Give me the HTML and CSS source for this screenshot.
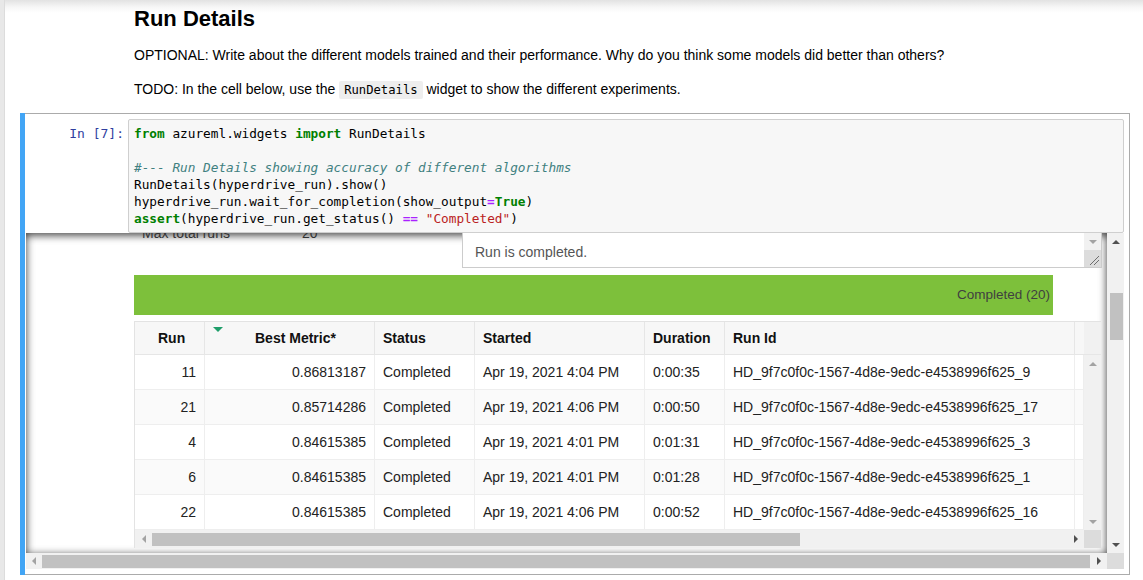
FILE: index.html
```html
<!DOCTYPE html>
<html>
<head>
<meta charset="utf-8">
<title>Run Details</title>
<link rel="stylesheet" href="styles.css">
</head>
<body>
<div class="page">
  <div class="gutter"></div>
  <main class="nb">
    <div class="md">
      <h2>Run Details</h2>
      <p>OPTIONAL: Write about the different models trained and their performance. Why do you think some models did better than others?</p>
      <p>TODO: In the cell below, use the <code class="inl">RunDetails</code> widget to show the different experiments.</p>
    </div>

    <div class="cell">
      <div class="input">
        <div class="prompt">In&nbsp;[7]:</div>
<pre class="code"><span class="k">from</span> azureml.widgets <span class="k">import</span> RunDetails

<span class="c">#--- Run Details showing accuracy of different algorithms</span>
RunDetails(hyperdrive_run).show()
hyperdrive_run.wait_for_completion(show_output<span class="o">=</span><span class="k">True</span>)
<span class="k">assert</span>(hyperdrive_run.get_status() <span class="o">==</span> <span class="s">"Completed"</span>)</pre>
      </div>

      <div class="output">
        <div class="viewport">
          <div class="widget">
            <div class="top">
              <div class="props"><span class="pk">Max total runs</span><span class="pv">20</span></div>
              <div class="log">
                <div class="log-text">Run is completed.</div>
                <div class="log-sb">
                  <div class="log-track"><div class="btn"><i class="tri-down light"></i></div></div>
                  <div class="log-grip">
                    <svg width="17" height="17" viewBox="0 0 17 17"><line x1="6" y1="15" x2="15" y2="6" stroke="#6e6e6e" stroke-width="1"/><line x1="10" y1="15" x2="15" y2="10" stroke="#6e6e6e" stroke-width="1"/></svg>
                  </div>
                </div>
              </div>
            </div>

            <div class="bar"><span>Completed (20)</span></div>

            <div class="table">
              <div class="thead">
                <div class="th th-run">Run</div>
                <div class="th th-metric"><i class="sort"></i>Best Metric*</div>
                <div class="th">Status</div>
                <div class="th">Started</div>
                <div class="th">Duration</div>
                <div class="th">Run Id</div>
                <div class="th th-fill"></div>
                <div class="th th-sb"></div>
              </div>
              <div class="tbody-wrap">
                <div class="rows">
                  <div class="row">
                    <div class="td num">11</div><div class="td num">0.86813187</div><div class="td">Completed</div><div class="td">Apr 19, 2021 4:04 PM</div><div class="td">0:00:35</div><div class="td">HD_9f7c0f0c-1567-4d8e-9edc-e4538996f625_9</div><div class="td"></div>
                  </div>
                  <div class="row">
                    <div class="td num">21</div><div class="td num">0.85714286</div><div class="td">Completed</div><div class="td">Apr 19, 2021 4:06 PM</div><div class="td">0:00:50</div><div class="td">HD_9f7c0f0c-1567-4d8e-9edc-e4538996f625_17</div><div class="td"></div>
                  </div>
                  <div class="row">
                    <div class="td num">4</div><div class="td num">0.84615385</div><div class="td">Completed</div><div class="td">Apr 19, 2021 4:01 PM</div><div class="td">0:01:31</div><div class="td">HD_9f7c0f0c-1567-4d8e-9edc-e4538996f625_3</div><div class="td"></div>
                  </div>
                  <div class="row">
                    <div class="td num">6</div><div class="td num">0.84615385</div><div class="td">Completed</div><div class="td">Apr 19, 2021 4:01 PM</div><div class="td">0:01:28</div><div class="td">HD_9f7c0f0c-1567-4d8e-9edc-e4538996f625_1</div><div class="td"></div>
                  </div>
                  <div class="row">
                    <div class="td num">22</div><div class="td num">0.84615385</div><div class="td">Completed</div><div class="td">Apr 19, 2021 4:06 PM</div><div class="td">0:00:52</div><div class="td">HD_9f7c0f0c-1567-4d8e-9edc-e4538996f625_16</div><div class="td"></div>
                  </div>
                </div>
                <div class="tvsb">
                  <div class="btn"><i class="tri-up light"></i></div>
                  <div class="btn"><i class="tri-down light"></i></div>
                </div>
              </div>
              <div class="thsb-row">
                <div class="thsb">
                  <div class="btn"><i class="tri-left light"></i></div>
                  <div class="thumb thsb-thumb"></div>
                  <div class="spacer"></div>
                  <div class="btn"><i class="tri-right"></i></div>
                </div>
                <div class="corner"></div>
              </div>
            </div>
          </div>
        </div>

        <div class="ovsb">
          <div class="btn"><i class="tri-up"></i></div>
          <div class="thumb ovsb-thumb"></div>
          <div class="spacer"></div>
          <div class="btn"><i class="tri-down"></i></div>
        </div>
        <div class="ohsb">
          <div class="btn btn-l"><i class="tri-left light"></i></div>
          <div class="thumb ohsb-thumb"></div>
          <div class="btn"><i class="tri-right"></i></div>
        </div>
        <div class="ocorner"></div>
      </div>
    </div>
  </main>
</div>
</body>
</html>
```

FILE: styles.css
```css
* { box-sizing: border-box; }

body {
  margin: 0;
  background: #eeeeee;
  font-family: "Liberation Sans", Arial, sans-serif;
  font-size: 14px;
  color: #000;
}

.page {
  display: flex;
  height: 580px;
  overflow: hidden;
}

.gutter {
  width: 5px;
  flex: none;
  background: linear-gradient(to right, #e8e8e8 0, #e8e8e8 4px, #dcdcdc 4px, #dcdcdc 5px);
}

.nb {
  flex: 1;
  background: linear-gradient(to bottom, #e2e2e2 0, #f6f6f6 7px, #ffffff 13px);
  padding-top: 6px;
}

/* markdown cell */
.md {
  padding-left: 129px;
}

.md h2 {
  margin: 0;
  font-size: 22px;
  line-height: 26px;
  font-weight: bold;
}

.md p {
  margin: 13px 0 0;
  line-height: 20px;
}

.md p + p {
  margin-top: 14px;
}

.inl {
  font-family: "DejaVu Sans Mono", monospace;
  font-size: 12.2px;
  background: #eeeeee;
  padding: 2px 5px;
  border-radius: 2px;
}

/* code cell */
.cell {
  position: relative;
  margin: 13px 0 0 15px;
  width: 1110px;
  border: 1px solid #ababab;
  padding: 5px;
}

.cell::before {
  content: "";
  position: absolute;
  left: -1px;
  top: -1px;
  bottom: -1px;
  width: 5px;
  background: #42a5f5;
}

.input {
  display: flex;
}

.prompt {
  width: 102px;
  flex: none;
  padding: 6px 4px 0 0;
  text-align: right;
  font-family: "DejaVu Sans Mono", monospace;
  font-size: 13px;
  line-height: 17px;
  color: #303f9f;
}

.code {
  flex: 1;
  margin: 0;
  height: 114px;
  background: #f7f7f7;
  border: 1px solid #cfcfcf;
  border-radius: 2px;
  padding: 5px 5px 6px;
  font-family: "DejaVu Sans Mono", monospace;
  font-size: 12.75px;
  line-height: 17px;
  color: #000;
}

.code .k { color: #008000; font-weight: bold; }
.code .o { color: #aa22ff; font-weight: bold; }
.code .s { color: #ba2121; }
.code .c { color: #408080; font-style: italic; }

/* output area */
.output {
  display: grid;
  grid-template-columns: 1fr 17px;
  grid-template-rows: 320px 16px;
}

.viewport {
  overflow: hidden;
  background: #fff;
  box-shadow: inset 0 2px 8px rgba(0, 0, 0, 0.8);
}

.widget {
  margin-top: -12px;
}

.top {
  display: flex;
  height: 47px;
}

.props {
  width: 436px;
  flex: none;
  padding: 2px 0 0 116px;
  display: flex;
  line-height: 20px;
  color: #333;
}

.pk { width: 160px; }

.log {
  flex: 1;
  margin-right: 5px;
  display: flex;
  background: #fff;
  border: 1px solid #cccccc;
}

.log-text {
  flex: 1;
  display: flex;
  align-items: flex-end;
  padding: 0 0 5px 12px;
  line-height: 20px;
  color: #555;
}

.log-sb {
  width: 17px;
  display: flex;
  flex-direction: column;
}

.log-track {
  flex: 1;
  background: #f1f1f1;
  display: flex;
  flex-direction: column;
  justify-content: flex-end;
}

.log-grip {
  height: 17px;
  background: #dcdcdc;
}

.log-grip svg { display: block; }

.bar {
  margin: 7px 54px 0 108px;
  height: 40px;
  background: #7dc03b;
  text-align: right;
  padding-right: 3px;
  font-family: "Liberation Sans", Arial, sans-serif;
  font-size: 13.5px;
  line-height: 40px;
  color: #404040;
}

/* table */
.table {
  margin: 6px 6px 0 108px;
  border-left: 1px solid #e3e3e3;
  border-top: 1px solid #e3e3e3;
}

.thead {
  display: grid;
  grid-template-columns: 70px 170px 100px 170px 80px 350px 9px 17px;
  height: 33px;
  background: #f7f7f7;
}

.th {
  position: relative;
  border-right: 1px solid #e6e6e6;
  border-bottom: 1px solid #e6e6e6;
  padding-left: 8px;
  line-height: 32px;
  font-weight: bold;
  color: #111;
  white-space: nowrap;
}

.th-run { padding-left: 23px; }
.th-metric { padding-left: 50px; }
.th-fill { padding: 0; border-right: none; }
.th-sb { padding: 0; border-right: none; background: #f1f1f1; }

.sort {
  position: absolute;
  left: 8px;
  top: 5px;
  width: 0;
  height: 0;
  border-left: 5px solid transparent;
  border-right: 5px solid transparent;
  border-top: 5px solid #1f9e6a;
}

.tbody-wrap {
  display: flex;
  height: 175px;
}

.rows {
  width: 949px;
}

.row {
  display: grid;
  grid-template-columns: 70px 170px 100px 170px 80px 350px 9px;
  height: 35px;
  background: #fff;
}

.row:nth-child(even) { background: #fafafa; }

.td {
  border-right: 1px solid #eeeeee;
  border-bottom: 1px solid #eeeeee;
  padding: 1px 8px 0;
  line-height: 33px;
  color: #222;
  white-space: nowrap;
  overflow: hidden;
}

.td:last-child { padding: 0; }

.td.num { text-align: right; }

.tvsb {
  width: 17px;
  background: #f1f1f1;
  display: flex;
  flex-direction: column;
  justify-content: space-between;
}

.thsb-row {
  display: flex;
  height: 18px;
}

.thsb {
  flex: 1;
  background: #f1f1f1;
  display: flex;
  align-items: center;
}

.thsb-thumb {
  width: 648px;
  height: 13px;
}

.corner {
  width: 17px;
  background: #dcdcdc;
}

/* scrollbars */
.btn {
  width: 17px;
  height: 17px;
  flex: none;
  display: flex;
  align-items: center;
  justify-content: center;
}

.thumb {
  background: #c1c1c1;
}

.spacer { flex: 1; }

.ovsb {
  background: #f1f1f1;
  display: flex;
  flex-direction: column;
  align-items: center;
}

.ovsb-thumb {
  width: 13px;
  height: 47px;
  margin-top: 43px;
  margin-left: 2px;
}

.ohsb {
  background: #f1f1f1;
  display: flex;
  align-items: center;
}

.ohsb .btn-l { width: 16px; }

.ohsb-thumb {
  flex: 1;
  height: 13px;
}

.ocorner {
  background: #dcdcdc;
}

/* triangles */
.tri-up, .tri-down, .tri-left, .tri-right {
  display: block;
  width: 0;
  height: 0;
}

.tri-up {
  border-left: 4px solid transparent;
  border-right: 4px solid transparent;
  border-bottom: 4px solid #505050;
}

.tri-down {
  border-left: 4px solid transparent;
  border-right: 4px solid transparent;
  border-top: 4px solid #505050;
}

.tri-left {
  border-top: 4px solid transparent;
  border-bottom: 4px solid transparent;
  border-right: 4px solid #505050;
}

.tri-right {
  border-top: 4px solid transparent;
  border-bottom: 4px solid transparent;
  border-left: 4px solid #505050;
}

.tri-up.light { border-bottom-color: #a3a3a3; }
.tri-down.light { border-top-color: #a3a3a3; }
.tri-left.light { border-right-color: #a3a3a3; }
.tri-right.light { border-left-color: #a3a3a3; }
```
